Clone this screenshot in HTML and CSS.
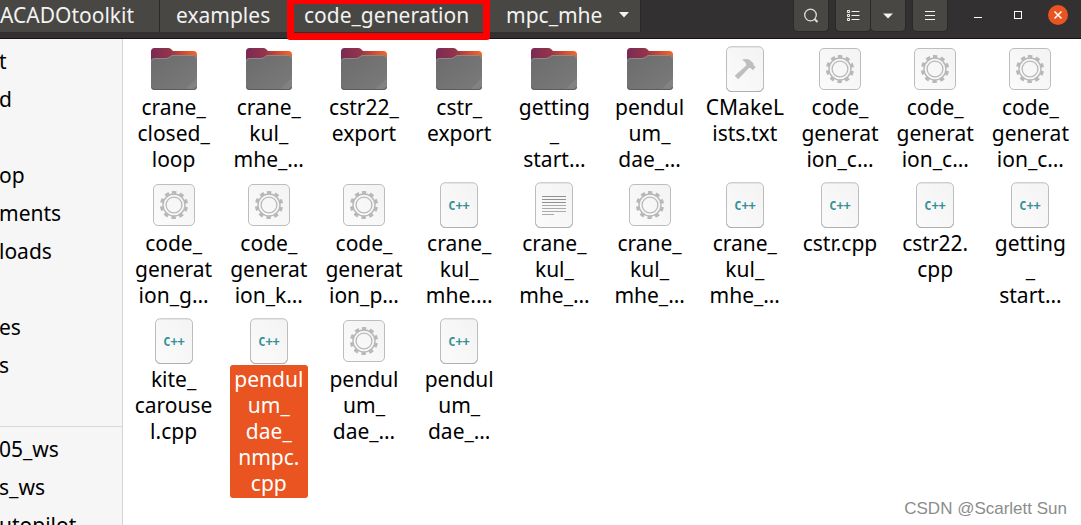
FILE: index.html
```html
<!DOCTYPE html>
<html lang="en">
<head>
<meta charset="utf-8">
<title>code_generation</title>
<link rel="stylesheet" href="styles.css">
</head>
<body>
<svg class="defs" aria-hidden="true">
  <defs>
    <linearGradient id="g-back" x1="0" x2="1" y1="0" y2="0">
      <stop offset="0" stop-color="#7a2a55"/><stop offset=".42" stop-color="#94344a"/><stop offset=".7" stop-color="#cf4a30"/><stop offset="1" stop-color="#f8662a"/>
    </linearGradient>
    <linearGradient id="g-front" x1="0" x2="1" y1="0" y2="1">
      <stop offset="0" stop-color="#6b6b6b"/><stop offset="1" stop-color="#7b7b7b"/>
    </linearGradient>
    <linearGradient id="g-paper" x1="0" x2="1" y1="1" y2="0">
      <stop offset="0" stop-color="#fbfbfb"/><stop offset="1" stop-color="#f3f3f3"/>
    </linearGradient>
    <symbol id="folder" viewBox="0 0 46 46">
      <path d="M0 14V5.500Q0 2 3.500 2H17Q19 2 20 3L22 5H42.500Q46 5 46 8.500V16H0Z" fill="url(#g-back)"/>
      <path d="M0 15.500Q0 12 3.500 12H15Q17 12 18.500 10.700L19.500 10Q20.500 9 22 9H42.500Q46 9 46 12.500V40.500Q46 44 42.500 44H3.500Q0 44 0 40.500Z" fill="url(#g-front)"/>
      <path d="M.5 15.500Q.5 12.500 3.500 12.500H15Q17 12.500 18.800 11L19.800 10.200Q20.700 9.500 22 9.500H42.500Q45.500 9.500 45.500 12.500" fill="none" stroke="#929292" stroke-width=".8"/>
      <path d="M34 43.500L46 32V40.500Q46 43.500 42.500 43.500Z" fill="#828282"/>
      <path d="M.5 41Q1 43.500 3.500 43.500H42.500Q45 43.500 45.500 41" fill="none" stroke="#5c5c5c"/>
    </symbol>
    <symbol id="page" viewBox="0 0 46 46">
      <rect x="4.500" y=".8" width="37" height="44.700" rx="4.500" fill="url(#g-paper)" stroke="#bdbdbd"/>
      <path d="M5 42Q6 45.500 9 45.500H37Q40 45.500 41 42" fill="none" stroke="#a9a9a9" stroke-width=".8"/>
    </symbol>
    <symbol id="cpp" viewBox="0 0 46 46">
      <use href="#page"/>
      <text x="23" y="27.500" text-anchor="middle" class="cpp-text">C++</text>
    </symbol>
    <symbol id="text" viewBox="0 0 46 46">
      <use href="#page"/>
      <path d="M11 14.500H35M11 17.500H35M11 20.500H35" stroke="#909090"/>
      <path d="M11 23.500H35M11 26.500H35M11 29.500H35M11 32.500H23" stroke="#aaaaaa"/>
    </symbol>
    <symbol id="hammer" viewBox="0 0 46 46">
      <use href="#page"/>
      <path d="M20 13.600Q25 12.300 28.500 14.500L31.500 17.500L31.700 19.300L33.800 21.300L30.600 24.200L28.700 22.100L26.900 22L16.200 33.200L12.700 29.700L24.300 19.400Q24.500 16.500 20 13.600Z" fill="#bebebe"/>
    </symbol>
    <symbol id="gear" viewBox="0 0 46 46">
      <rect x="2.500" y="2.500" width="41" height="41" rx="4.500" fill="url(#g-paper)" stroke="#bdbdbd"/>
      <circle cx="23" cy="23" r="12.500" fill="none" stroke="#b8b8b8" stroke-width="3.200" stroke-dasharray="4.200 3.654" transform="rotate(-99 23 23)"/>
      <circle cx="23" cy="23" r="11" fill="none" stroke="#b8b8b8" stroke-width="1.400"/>
      <circle cx="23" cy="23" r="7.900" fill="none" stroke="#b8b8b8" stroke-width="1.300"/>
    </symbol>
  </defs>
</svg>

<header class="headerbar">
  <nav class="path" aria-label="Path">
    <button class="crumb crumb-first">ACADOtoolkit</button>
    <button class="crumb crumb-mid">examples</button>
    <button class="crumb crumb-current">code_generation</button>
    <button class="crumb crumb-last">mpc_mhe
      <svg width="12" height="6" viewBox="0 0 12 6"><path d="M1 0H11L6 5.500Z" fill="#f2f2f2"/></svg>
    </button>
  </nav>
  <div class="tools">
    <button class="tool" aria-label="Search">
      <svg width="16" height="16" viewBox="0 0 16 16" fill="none" stroke="#dededc"><circle cx="7.500" cy="7" r="5.800" stroke-width="1.300"/><path d="M11.500 11L14.500 14" stroke-width="2"/></svg>
    </button>
    <div class="group">
      <button class="tool" aria-label="List view">
        <svg width="14" height="14" viewBox="0 0 14 14" fill="none" stroke="#f2f2f2"><path d="M1.500 1.500h2v2h-2zM1.500 5.500h2v2h-2zM1.500 9.500h2v2h-2zM5.500 2.500h8M5.500 6.500h8M5.500 10.500h8"/></svg>
      </button>
      <button class="tool" aria-label="View options">
        <svg width="12" height="6" viewBox="0 0 12 6"><path d="M1 .5H11L6 5.500Z" fill="#f2f2f2"/></svg>
      </button>
    </div>
    <button class="tool" aria-label="Menu">
      <svg width="12" height="12" viewBox="0 0 12 12" stroke="#f2f2f2"><path d="M1 1.500H11M1 5.500H11M1 9.500H11"/></svg>
    </button>
  </div>
  <div class="window-controls">
    <button class="control" aria-label="Minimize"><svg width="20" height="20" viewBox="0 0 20 20"><path d="M6 12.500H14" stroke="#fff"/></svg></button>
    <button class="control" aria-label="Maximize"><svg width="20" height="20" viewBox="0 0 20 20"><rect x="6.500" y="6.500" width="7" height="7" fill="none" stroke="#fff"/></svg></button>
    <button class="control" aria-label="Close"><svg width="20" height="20" viewBox="0 0 20 20"><circle cx="10" cy="10" r="10" fill="#e95420"/><path d="M6.500 6.500L13.500 13.500M13.500 6.500L6.500 13.500" stroke="#fff" stroke-width="1.500"/></svg></button>
  </div>
</header>

<div class="body">
  <nav class="sidebar" aria-label="Places">
    <div class="places">
      <a href="#">t</a>
      <a href="#">d</a>
      <a href="#" aria-label="Home"></a>
      <a href="#">op</a>
      <a href="#">ments</a>
      <a href="#">loads</a>
      <a href="#" aria-label="Music"></a>
      <a href="#">es</a>
      <a href="#">s</a>
      <a href="#" aria-label="Trash"></a>
    </div>
    <div class="places bookmarks">
      <a href="#">05_ws</a>
      <a href="#">s_ws</a>
      <a href="#">utopilot</a>
    </div>
  </nav>

  <main class="files">
    <button class="file"><svg><use href="#folder"/></svg><span>crane_<br>closed_<br>loop</span></button>
    <button class="file"><svg><use href="#folder"/></svg><span>crane_<br>kul_<br>mhe_…</span></button>
    <button class="file"><svg><use href="#folder"/></svg><span>cstr22_<br>export</span></button>
    <button class="file"><svg><use href="#folder"/></svg><span>cstr_<br>export</span></button>
    <button class="file"><svg><use href="#folder"/></svg><span>getting<br>_<br>start…</span></button>
    <button class="file"><svg><use href="#folder"/></svg><span>pendul<br>um_<br>dae_…</span></button>
    <button class="file"><svg><use href="#hammer"/></svg><span>CMakeL<br>ists.txt</span></button>
    <button class="file"><svg><use href="#gear"/></svg><span>code_<br>generat<br>ion_c…</span></button>
    <button class="file"><svg><use href="#gear"/></svg><span>code_<br>generat<br>ion_c…</span></button>
    <button class="file"><svg><use href="#gear"/></svg><span>code_<br>generat<br>ion_c…</span></button>

    <button class="file"><svg><use href="#gear"/></svg><span>code_<br>generat<br>ion_g…</span></button>
    <button class="file"><svg><use href="#gear"/></svg><span>code_<br>generat<br>ion_k…</span></button>
    <button class="file"><svg><use href="#gear"/></svg><span>code_<br>generat<br>ion_p…</span></button>
    <button class="file"><svg><use href="#cpp"/></svg><span>crane_<br>kul_<br>mhe.…</span></button>
    <button class="file"><svg><use href="#text"/></svg><span>crane_<br>kul_<br>mhe_…</span></button>
    <button class="file"><svg><use href="#gear"/></svg><span>crane_<br>kul_<br>mhe_…</span></button>
    <button class="file"><svg><use href="#cpp"/></svg><span>crane_<br>kul_<br>mhe_…</span></button>
    <button class="file"><svg><use href="#cpp"/></svg><span>cstr.cpp</span></button>
    <button class="file"><svg><use href="#cpp"/></svg><span>cstr22.<br>cpp</span></button>
    <button class="file"><svg><use href="#cpp"/></svg><span>getting<br>_<br>start…</span></button>

    <button class="file"><svg><use href="#cpp"/></svg><span>kite_<br>carouse<br>l.cpp</span></button>
    <button class="file selected"><svg><use href="#cpp"/></svg><span>pendul<br>um_<br>dae_<br>nmpc.<br>cpp</span></button>
    <button class="file"><svg><use href="#gear"/></svg><span>pendul<br>um_<br>dae_…</span></button>
    <button class="file"><svg><use href="#cpp"/></svg><span>pendul<br>um_<br>dae_…</span></button>
  </main>
  <div class="watermark">CSDN @Scarlett Sun</div>
</div>
</body>
</html>
```

FILE: styles.css
```css
* { box-sizing: border-box; }
body {
  margin: 0;
  height: 100vh;
  display: flex;
  flex-direction: column;
  overflow: hidden;
  background: #fff;
  color: #000;
  font: 21px/26px "Noto Sans", sans-serif;
}
button {
  margin: 0;
  padding: 0;
  border: 0;
  background: none;
  color: inherit;
  font: inherit;
}
.defs { position: absolute; width: 0; height: 0; }

.headerbar {
  flex: none;
  display: flex;
  align-items: flex-start;
  height: 39px;
  padding-right: 13px;
  background: #323030;
  border-bottom: 1px solid #141212;
  color: #f2f2f2;
}
.path { display: flex; }
.crumb {
  position: relative;
  height: 32px;
  padding: 0 16px 2px;
  background: #484743;
  border-right: 1px solid #2a2828;
  text-align: left;
  white-space: nowrap;
}
.crumb-first { width: 160px; padding-left: 0; }
.crumb-mid { width: 128px; }
.crumb-current { width: 202px; }
.crumb-last {
  display: flex;
  align-items: center;
  justify-content: space-between;
  width: 151px;
  padding-right: 10px;
}
.crumb-current::after {
  content: "";
  position: absolute;
  inset: -3px -1px -8px;
  z-index: 1;
  border: 7px solid #fe0000;
  border-radius: 3px;
}
.tools { display: flex; gap: 8px; margin-left: auto; }
.tool {
  display: flex;
  align-items: center;
  justify-content: center;
  width: 34px;
  height: 31px;
  background: #484743;
  border-radius: 0 0 4px 4px;
  box-shadow: 0 0 0 1px #2b2929;
}
.group { display: flex; gap: 1px; }
.window-controls { display: flex; gap: 20px; margin: 5px 0 0 21px; }
.control { width: 20px; height: 20px; }
.control svg { display: block; }

.body { position: relative; flex: 1; display: flex; min-height: 0; }
.sidebar {
  flex: none;
  width: 123px;
  overflow: hidden;
  background: #f6f6f6;
  border-right: 1px solid #d4d4d4;
}
.places { padding: 3px 0 4px; }
.bookmarks { border-top: 1px solid #d9d9d9; }
.places a {
  display: block;
  height: 38px;
  margin-left: -1px;
  line-height: 38px;
  color: inherit;
  text-decoration: none;
}

.files {
  flex: 1;
  display: grid;
  grid-template-columns: repeat(auto-fill, minmax(95px, 1fr));
  align-content: start;
  align-items: start;
  row-gap: 8px;
  padding: 7px 3px 0;
}
.file { display: flex; flex-direction: column; align-items: center; gap: 1px; }
.file svg { width: 46px; height: 46px; }
.file span { width: 78px; padding: 1px 0 2px; border-radius: 3px; white-space: nowrap; }
.selected span { background: #e95420; color: #fff; }
.cpp-text { font: bold 12px "DejaVu Sans Mono", monospace; fill: #369196; }

.watermark {
  position: absolute;
  right: 14px;
  bottom: 4px;
  color: #8c8c8c;
  font: 17px/24px "Liberation Sans", sans-serif;
}
```
